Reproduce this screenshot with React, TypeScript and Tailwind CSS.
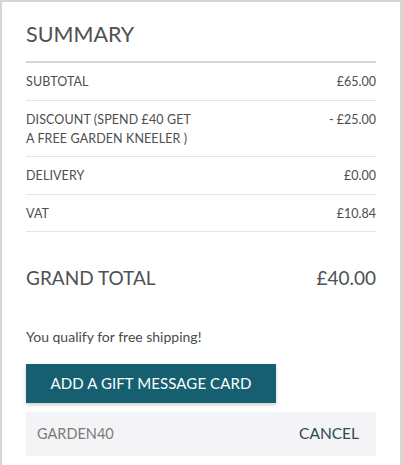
import React from "react";

const Row = ({ label, value }: { label: React.ReactNode; value: string }) => (
  <div className="flex justify-between items-start pt-[9px] pb-[8.5px] border-b border-[#e6e6e8]">
    <div className="text-[12.5px] leading-[19px] uppercase text-[#4e4e4e] tracking-[0.1px]">{label}</div>
    <div className="text-[12.5px] leading-[19px] text-[#4e4e4e]">{value}</div>
  </div>
);

export default function App() {
  return (
    <div className="w-[403px] h-[465px] bg-[#d6d8d0] pl-[2px] pr-[3px] pt-[2px]" style={{ fontFamily: "Lato, 'Open Sans', sans-serif" }}>
      <div className="bg-white h-full px-[24px] pt-[17px]">
        <h1 className="text-[21.5px] leading-[30px] text-[#4d5253] pb-[12px] border-b-2 border-[#d4d4da]">SUMMARY</h1>
        <Row label="Subtotal" value="£65.00" />
        <Row label={<>Discount (spend £40 get<br />a free garden kneeler )</>} value="- £25.00" />
        <Row label="Delivery" value="£0.00" />
        <Row label="VAT" value="£10.84" />
        <div className="flex justify-between items-center mt-[33px] text-[19px] leading-[26px] text-[#4d5253]">
          <span>GRAND TOTAL</span>
          <span>£40.00</span>
        </div>
        <p className="mt-[37px] text-[14px] leading-[18px] text-[#4a4a4a]">You qualify for free shipping!</p>
        <button className="mt-[18px] w-[250px] h-[39px] bg-[#155f71] text-white text-[15px] shadow-[0_2px_4px_rgba(0,0,0,0.2)] tracking-[0.1px]">ADD A GIFT MESSAGE CARD</button>
        <div className="mt-[9px] h-[44px] bg-[#f4f4f7] flex items-center justify-between pl-[11px] pr-[17px]">
          <span className="text-[14.5px] text-[#7a7a7a]">GARDEN40</span>
          <span className="text-[15.5px] text-[#2c4a50]">CANCEL</span>
        </div>
      </div>
    </div>
  );
}
